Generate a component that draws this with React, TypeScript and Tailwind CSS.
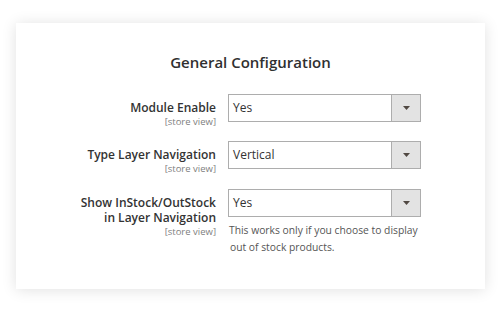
const font = { fontFamily: '"Open Sans", "Liberation Sans", sans-serif' };

function SelectBox({ value }: { value: string }) {
  return (
    <div className="flex h-[28px] w-[193px] border border-[#adadad] bg-white">
      <div className="flex flex-1 items-center pl-[4px] text-[12px] text-[#333]">{value}</div>
      <div className="flex w-[29px] items-center justify-center border-l border-[#adadad] bg-[#e3e3e3]">
        <svg width="7" height="4" viewBox="0 0 7 4">
          <path d="M0 0h7L3.5 4z" fill="#514943" />
        </svg>
      </div>
    </div>
  );
}

function Row({
  label,
  value,
  className,
  help,
}: {
  label: string[];
  value: string;
  className: string;
  help?: string[];
}) {
  return (
    <div className={`flex items-start gap-[12px] ${className}`}>
      <div className="flex w-[200px] flex-col items-end pt-[6px] text-right">
        {label.map((l) => (
          <div key={l} className="text-[12px] font-semibold leading-[15px] text-[#333]">
            {l}
          </div>
        ))}
        <div className="mt-[1px] text-[9.5px] leading-[12px] text-[#808080]">[store view]</div>
      </div>
      <div className="flex flex-col">
        <SelectBox value={value} />
        {help && (
          <div className="mt-[5px] pl-[1px] text-[10.3px] leading-[17px] text-[#555]">
            {help.map((h, i) => (
              <div key={h} className={i === 1 ? "pl-[1px]" : ""}>
                {h}
              </div>
            ))}
          </div>
        )}
      </div>
    </div>
  );
}

export default function App() {
  return (
    <div className="h-[318px] w-[500px] bg-white pt-[23px] pl-[16px]" style={font}>
      <div className="flex h-[266px] w-[469px] flex-col bg-white pt-[29px] shadow-[0_1px_14px_rgba(0,0,0,0.12)]">
        <h2 className="mb-[22px] text-center text-[15px] font-semibold leading-[20px] text-[#303030]">
          General Configuration
        </h2>
        <Row label={["Module Enable"]} value="Yes" className="h-[47px]" />
        <Row label={["Type Layer Navigation"]} value="Vertical" className="h-[48px]" />
        <Row
          label={["Show InStock/OutStock", "in Layer Navigation"]}
          value="Yes"
          className=""
          help={["This works only if you choose to display", "out of stock products."]}
        />
      </div>
    </div>
  );
}
